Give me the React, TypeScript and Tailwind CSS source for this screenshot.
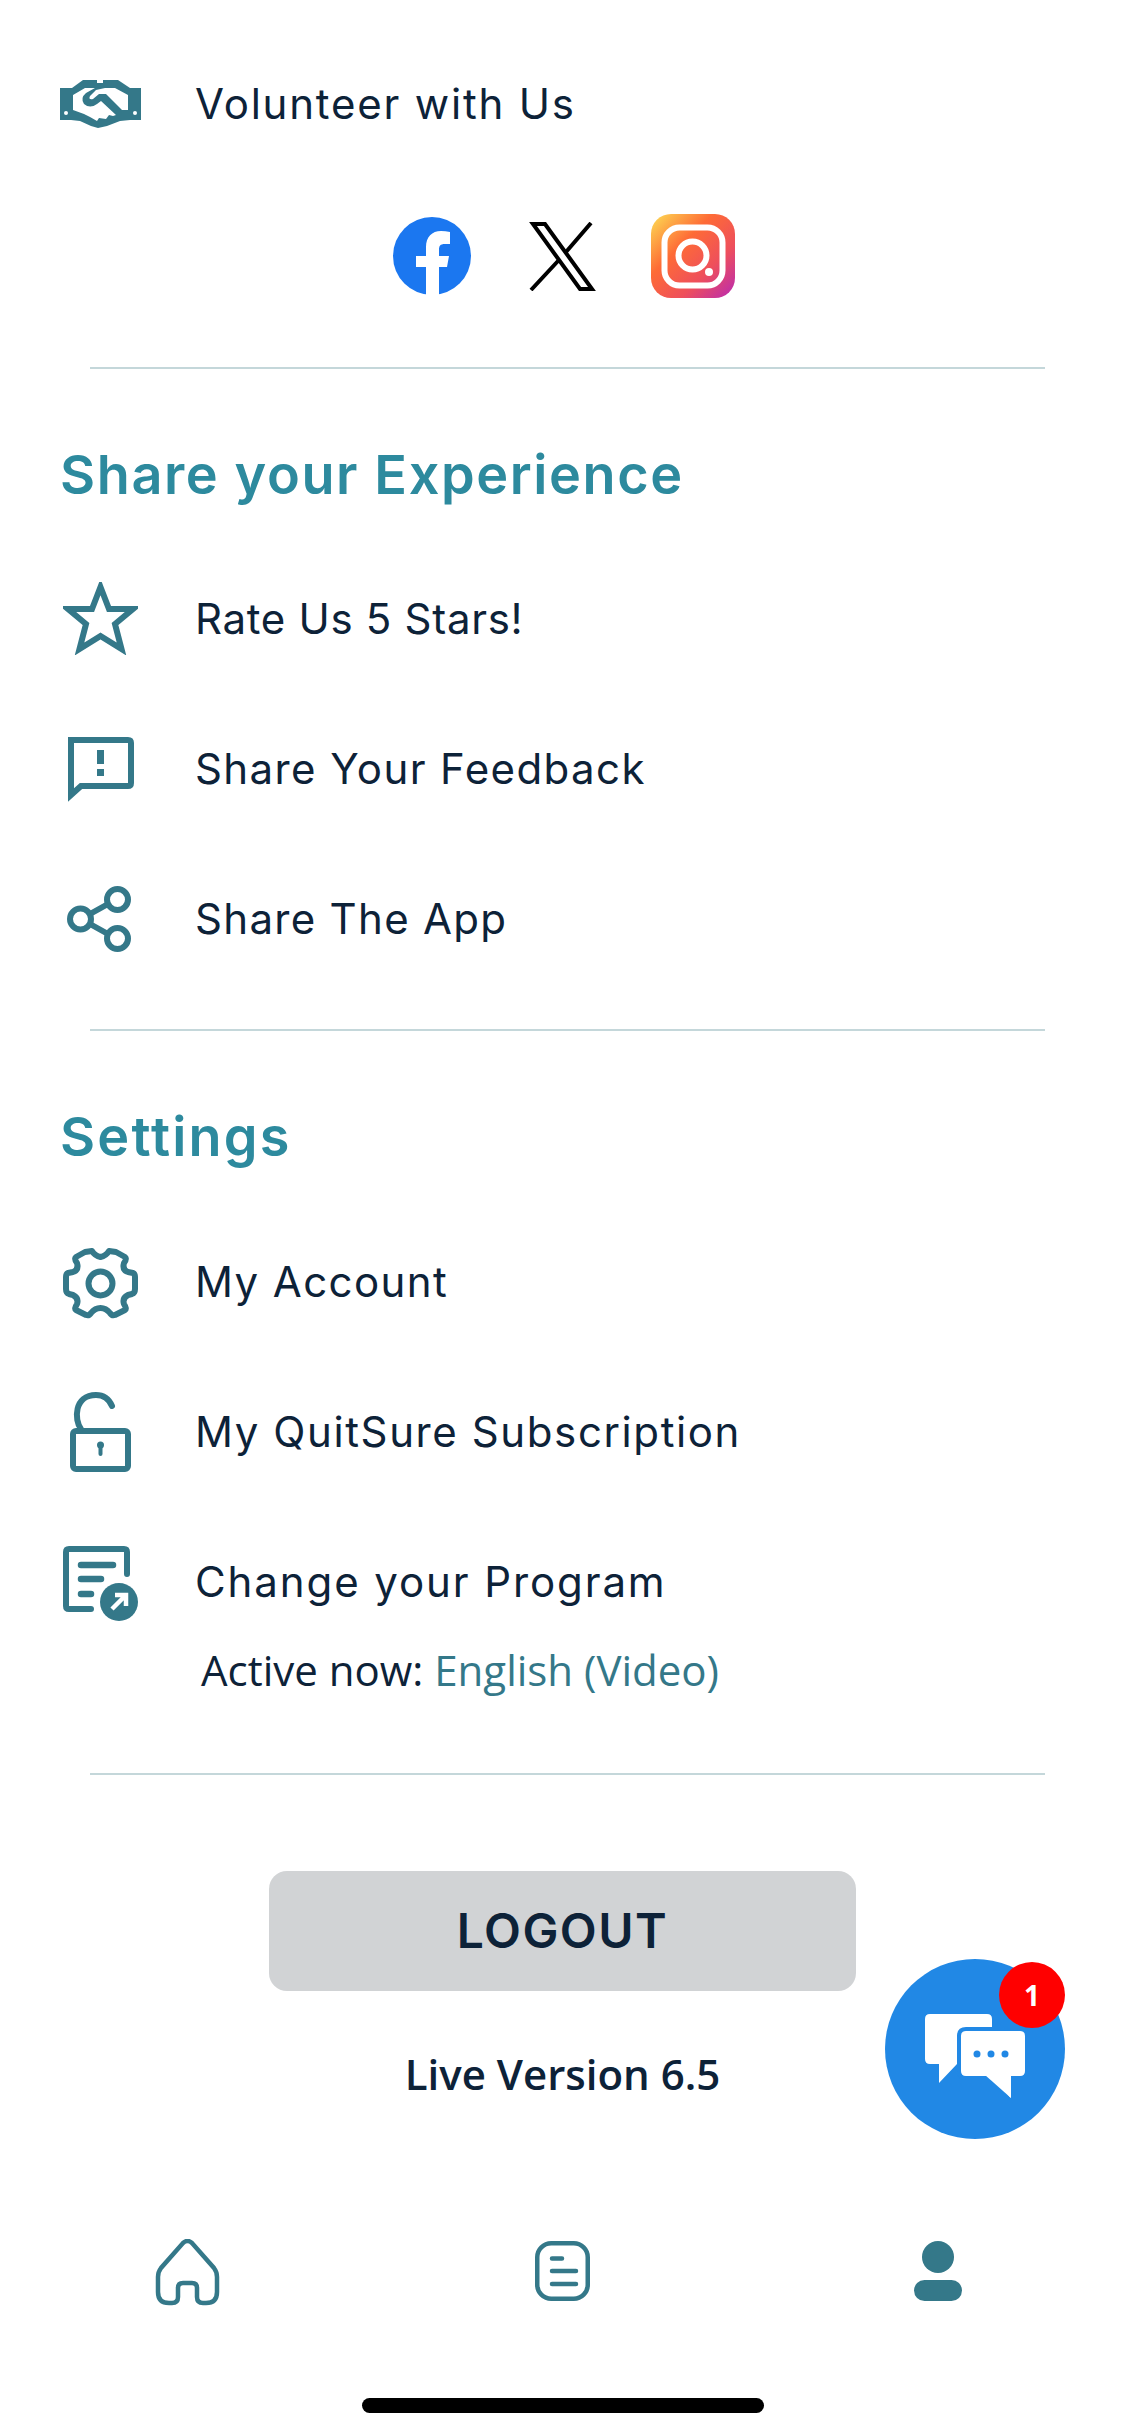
import React from "react";

const teal = "#347889";

function Handshake() {
  return (
    <svg width="81" height="48" viewBox="0 0 81 48" fill="none">
      <path d="M0 8H12L23 0H37V3H43V0H58L70 8H81V40H70L60 41L47 46L38 48L31 46L20 41L11 40H0Z" fill={teal} />
      <path d="M13 15L25 8H35L26 13Q20 18 24 24Q30 29 37 24L41 21L56 35L53 36L49 35L46 39L39 38L37 41L30 37L24 34L13 30Z" fill="white" />
      <path d="M45 8H55L68 15V30H62L46 14H39L33 19Q28 20 30 16L36 10Z" fill="white" />
      <circle cx="6" cy="33" r="2" fill="white" />
      <circle cx="75" cy="33" r="2" fill="white" />
    </svg>
  );
}

function Star() {
  return (
    <svg width="75" height="73" viewBox="0 0 75 73" fill="none" className="-mt-[2px]">
      <path d="M37.500 5L46 27H70L52 42L58.500 67L37.500 54L16.500 67L23 42L5 27H29Z" stroke={teal} strokeWidth="6" />
    </svg>
  );
}

function Feedback() {
  return (
    <svg width="66" height="65" viewBox="0 0 66 65" fill="none">
      <path d="M3 3H60Q63 3 63 6V46Q63 49 60 49H13L3 58Z" stroke={teal} strokeWidth="6" />
      <rect x="29" y="13" width="7" height="14" fill={teal} />
      <rect x="29" y="32" width="7" height="7" fill={teal} />
    </svg>
  );
}

function ShareIcon() {
  return (
    <svg width="64" height="66" viewBox="0 0 64 66" fill="none" stroke={teal} strokeWidth="6" className="-ml-[3px]">
      <circle cx="13.500" cy="33" r="10.500" />
      <circle cx="50.500" cy="13.500" r="10.500" />
      <circle cx="50.500" cy="52.500" r="10.500" />
      <path d="M23 28L41 18M23 38L41 48" />
    </svg>
  );
}

function Gear() {
  return (
    <svg width="75" height="71" viewBox="0 0 75 71" fill="none" stroke={teal} strokeWidth="6" strokeLinejoin="round" className="mt-[3px]">
      <circle cx="37.500" cy="35.500" r="12" />
      <path d="M29 3L22 4L13 9Q11 11 14 15Q16 22 10 24L5 25Q3 26 3 29V41Q3 45 6 46L10 47Q16 50 14 56Q11 61 13 62L23 67Q26 68 28 65Q32 60 37.500 60Q43 60 47 65Q49 68 52 67L62 62Q64 61 61 56Q59 50 65 47L69 46Q72 45 72 41V29Q72 26 70 25L65 24Q59 22 61 15Q64 11 62 9L53 4L46 3Q43 8 37.500 9Q32 8 29 3Z" />
    </svg>
  );
}

function Lock() {
  return (
    <svg width="61" height="80" viewBox="0 0 61 80" fill="none">
      <rect x="3" y="39" width="55" height="38" rx="3" stroke={teal} strokeWidth="6" />
      <path d="M11 37C4 28 4 3 26 3C33 3 39 7 42 14" stroke={teal} strokeWidth="6" strokeLinecap="round" />
      <circle cx="30.500" cy="53" r="3.500" fill={teal} />
      <rect x="28.500" y="53" width="4" height="11" rx="2" fill={teal} />
    </svg>
  );
}

function ProgramDoc() {
  return (
    <svg width="75" height="75" viewBox="0 0 75 75" fill="none" className="mt-[3px]">
      <path d="M28 63H6Q3 63 3 60V6Q3 3 6 3H61Q64 3 64 6V28" stroke={teal} strokeWidth="6" strokeLinecap="round" />
      <path d="M18 19H50M18 33H38M18 48H28" stroke={teal} strokeWidth="6.500" strokeLinecap="round" />
      <circle cx="56" cy="56" r="19" fill={teal} />
      <path d="M49 63L62 50M52 49H63V60" stroke="white" strokeWidth="4.500" />
    </svg>
  );
}

function Facebook() {
  return (
    <svg width="78" height="78" viewBox="0 0 78 78">
      <circle cx="39" cy="39" r="39" fill="#1b77f0" />
      <path d="M33 78V50H23V39H33V30C33 20 39 14 48 14C51 14 54 14.500 57 15V27H52C47 27 46 29 46 33V39H56L54 50H46V78Z" fill="white" />
    </svg>
  );
}

function XLogo() {
  return (
    <svg width="67" height="69" viewBox="0 0 67 69" fill="none" stroke="#000" strokeWidth="4">
      <path d="M4 2H16L63 67H51Z" />
      <path d="M62 1L37 30M29 39L2 68" />
    </svg>
  );
}

function Instagram() {
  return (
    <svg width="84" height="84" viewBox="0 0 84 84" fill="none">
      <defs>
        <linearGradient id="ig" x1="0.050" y1="0.050" x2="0.950" y2="0.950">
          <stop offset="0" stopColor="#fdd050" />
          <stop offset="0.350" stopColor="#fe6b36" />
          <stop offset="0.700" stopColor="#ee4f5c" />
          <stop offset="1" stopColor="#c12fa6" />
        </linearGradient>
      </defs>
      <rect width="84" height="84" rx="20" fill="url(#ig)" />
      <rect x="13.500" y="13.500" width="58" height="58" rx="15" stroke="white" strokeWidth="6" />
      <circle cx="41.500" cy="41.500" r="14" stroke="white" strokeWidth="6" />
      <circle cx="58" cy="58" r="4" fill="white" />
    </svg>
  );
}

function HomeIcon() {
  return (
    <svg width="65" height="67" viewBox="0 0 65 67" fill="none">
      <path d="M28 4Q32.500 0 37 4L59 29Q62 33 62 38V53Q62 64 51 64H48Q42 64 42 58V49Q42 44 37 44H28Q23 44 23 49V58Q23 64 17 64H14Q3 64 3 53V38Q3 33 6 29Z" stroke={teal} strokeWidth="4.500" />
    </svg>
  );
}

function ListIcon() {
  return (
    <svg width="55" height="60" viewBox="0 0 55 60" fill="none" stroke={teal} className="-mt-[3px]">
      <rect x="2.250" y="2.250" width="50.500" height="55.500" rx="14" strokeWidth="4.500" />
      <path d="M17 17.500H27M17 30H41M17 43H41" strokeWidth="4.500" strokeLinecap="round" />
    </svg>
  );
}

function PersonIcon() {
  return (
    <svg width="48" height="60" viewBox="0 0 48 60" fill={teal} className="-mt-[3px]">
      <ellipse cx="24" cy="16" rx="16" ry="16" />
      <rect x="0" y="39" width="48" height="21" rx="10.500" />
    </svg>
  );
}

function ChatIcon() {
  return (
    <svg width="100" height="84" viewBox="0 0 100 84" fill="none" className="mt-[14px]">
      <path d="M5 0H62Q67 0 67 5V50H32L14 69V50H5Q0 50 0 45V5Q0 0 5 0Z" fill="white" />
      <path d="M41 17H95Q100 17 100 22V57Q100 62 95 62H68L85.500 84V62H41Q36 62 36 57V22Q36 17 41 17Z" fill="white" stroke="#2188e5" strokeWidth="8" paintOrder="stroke" />
      <path d="M60 61H86V84Z" fill="white" />
      <circle cx="52" cy="40" r="3.500" fill="#2188e5" />
      <circle cx="66" cy="40" r="3.500" fill="#2188e5" />
      <circle cx="80" cy="40" r="3.500" fill="#2188e5" />
    </svg>
  );
}

function Row({ icon, label, tracking }: { icon: React.ReactNode; label: string; tracking: string }) {
  return (
    <div className="flex h-[150px] items-center pl-[60px]">
      <div className="flex w-[135px] shrink-0 items-center">
        <div className="flex w-[81px] justify-center">{icon}</div>
      </div>
      <span className={`text-[42px] leading-none text-[#0d2238] font-['Inter',sans-serif] ${tracking}`}>{label}</span>
    </div>
  );
}

function Divider({ className }: { className: string }) {
  return <div className={`ml-[90px] h-[2px] w-[955px] bg-[#c4d7da] ${className}`} />;
}

function Heading({ children, tracking }: { children: React.ReactNode; tracking: string }) {
  return (
    <h2 className={`mt-[76px] h-[60px] pl-[60px] text-[54px] leading-[60px] font-semibold text-[#2d8a9e] font-['Inter',sans-serif] ${tracking}`}>
      {children}
    </h2>
  );
}

export default function App() {
  return (
    <div className="relative h-[2436px] w-[1125px] overflow-hidden bg-white pt-[29px]">
      <Row icon={<Handshake />} label="Volunteer with Us" tracking="tracking-[1.8px]" />

      <div className="mt-[35px] flex h-[84px] items-center pl-[393px]">
        <Facebook />
        <div className="ml-[58px]"><XLogo /></div>
        <div className="ml-[55px]"><Instagram /></div>
      </div>

      <Divider className="mt-[69px]" />

      <Heading tracking="tracking-[1.6px]">Share your Experience</Heading>
      <div className="mt-[39px]">
        <Row icon={<Star />} label="Rate Us 5 Stars!" tracking="tracking-[0.7px]" />
        <Row icon={<Feedback />} label="Share Your Feedback" tracking="tracking-[1.4px]" />
        <Row icon={<ShareIcon />} label="Share The App" tracking="tracking-[1.3px]" />
      </div>

      <Divider className="mt-[34.5px]" />

      <Heading tracking="tracking-[2.2px]">Settings</Heading>
      <div className="mt-[40px]">
        <Row icon={<Gear />} label="My Account" tracking="tracking-[1.4px]" />
        <Row icon={<Lock />} label="My QuitSure Subscription" tracking="tracking-[1.6px]" />
        <Row icon={<ProgramDoc />} label="Change your Program" tracking="tracking-[1.9px]" />
      </div>

      <p className="-mt-[17px] h-[60px] pl-[201px] text-[42px] leading-[60px] text-[#0d2238] font-['Open_Sans',sans-serif]">
        Active now: <span className="text-[#347889]">English (Video)</span>
      </p>

      <Divider className="mt-[73px]" />

      <button className="mx-auto mt-[96px] flex h-[120px] w-[587px] items-center justify-center rounded-[18px] bg-[#d1d3d5] text-[48px] font-semibold tracking-[1.5px] text-[#0d2238] font-['Inter',sans-serif]">
        LOGOUT
      </button>

      <p className="mt-[53px] h-[60px] text-center text-[42px] leading-[60px] font-semibold text-[#0d2238] font-['Open_Sans',sans-serif]">
        Live Version 6.5
      </p>

      <nav className="mt-[135.5px] grid h-[67px] grid-cols-3 items-center justify-items-center">
        <HomeIcon />
        <ListIcon />
        <PersonIcon />
      </nav>

      <div className="mx-auto mt-[91.5px] h-[15px] w-[402px] rounded-full bg-black" />

      <div className="absolute left-[885px] top-[1959px] flex h-[180px] w-[180px] items-center justify-center rounded-full bg-[#2188e5]">
        <ChatIcon />
        <div className="absolute right-0 top-[3px] flex h-[66px] w-[66px] items-center justify-center rounded-full bg-[#ff0000] text-[28px] font-bold text-white font-['Open_Sans',sans-serif]">
          1
        </div>
      </div>
    </div>
  );
}
